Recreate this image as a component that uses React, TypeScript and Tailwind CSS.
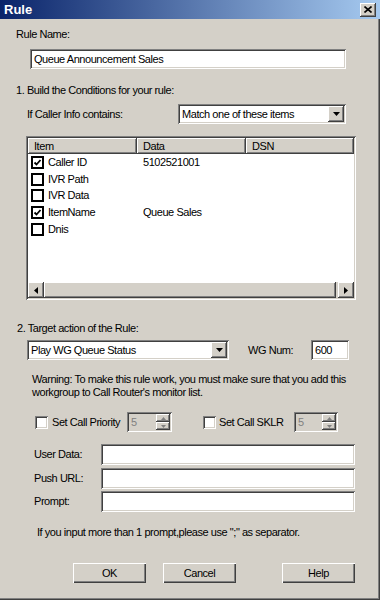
const sunken = 'shadow-[inset_1px_1px_0_#808080,inset_-1px_-1px_0_#ffffff,inset_2px_2px_0_#404040,inset_-2px_-2px_0_#d4d0c8]'
const raised = 'shadow-[inset_-1px_-1px_0_#404040,inset_1px_1px_0_#ffffff,inset_-2px_-2px_0_#808080,inset_2px_2px_0_#d4d0c8]'

function DownArrow() {
  return (
    <svg width="7" height="4" viewBox="0 0 7 4">
      <path d="M0 0h7L3.5 4z" fill="#000" />
    </svg>
  )
}

function Combo({ value, className }: { value: string; className: string }) {
  return (
    <div className={`flex items-center bg-white p-[2px] ${sunken} ${className}`}>
      <span className="flex-1 truncate pl-[2px]">{value}</span>
      <span className={`flex h-full w-[16px] items-center justify-center bg-[#d4d0c8] ${raised}`}>
        <DownArrow />
      </span>
    </div>
  )
}

function Field({ value, className }: { value?: string; className: string }) {
  return (
    <div className={`flex items-center bg-white pl-[4px] ${sunken} ${className}`}>
      {value}
    </div>
  )
}

function ListCheck({ checked }: { checked: boolean }) {
  return (
    <span className="flex h-[13px] w-[13px] items-center justify-center border-2 border-black bg-white">
      {checked ? (
        <svg width="9" height="9" viewBox="0 0 9 9">
          <path d="M1.5 4.5l2 2 4-4.5" fill="none" stroke="#000" strokeWidth="1.8" />
        </svg>
      ) : null}
    </span>
  )
}

function DialogCheck() {
  return <span className={`block h-[13px] w-[13px] bg-white ${sunken}`} />
}

function Spin({ className }: { className: string }) {
  return (
    <div className={`flex items-center bg-[#d4d0c8] p-[2px] ${sunken} ${className}`}>
      <span className="flex-1 pl-[2px] text-[#808080]">5</span>
      <span className="flex h-full w-[14px] flex-col">
        <span className={`flex flex-1 items-center justify-center ${raised}`}>
          <svg width="5" height="3" viewBox="0 0 5 3"><path d="M2.5 0L5 3H0z" fill="#808080" /></svg>
        </span>
        <span className={`flex flex-1 items-center justify-center ${raised}`}>
          <svg width="5" height="3" viewBox="0 0 5 3"><path d="M0 0h5L2.5 3z" fill="#808080" /></svg>
        </span>
      </span>
    </div>
  )
}

function Button({ label, className }: { label: string; className: string }) {
  return (
    <div className={`flex h-[20px] w-[73px] items-center justify-center bg-[#d4d0c8] shadow-[inset_1px_1px_0_#ffffff,inset_-1px_-1px_0_#404040,inset_-2px_-2px_0_#808080] ${className}`}>
      {label}
    </div>
  )
}

const rows = [
  { item: 'Caller ID', data: '5102521001', checked: true },
  { item: 'IVR Path', data: '', checked: false },
  { item: 'IVR Data', data: '', checked: false },
  { item: 'ItemName', data: 'Queue Sales', checked: true },
  { item: 'Dnis', data: '', checked: false },
]

export default function App() {
  return (
    <div className="relative h-[600px] w-[380px] overflow-hidden whitespace-nowrap bg-[#d4d0c8] font-['Liberation_Sans',Arial,sans-serif] text-[11px] leading-[13px] tracking-[-0.45px] text-black shadow-[inset_-1px_-1px_0_#404040,inset_-2px_-2px_0_#808080]">
      <div className="flex h-[19px] items-center justify-between bg-[linear-gradient(90deg,#0a246a,#a6caf0)] pl-[4px] pr-[4px]">
        <span className="text-[13px] font-bold tracking-normal text-white">Rule</span>
        <span className={`flex h-[14px] w-[16px] items-center justify-center bg-[#d4d0c8] ${raised}`}>
          <svg width="8" height="7" viewBox="0 0 8 7">
            <path d="M0.5 0.5l7 6M7.5 0.5l-7 6" stroke="#000" strokeWidth="1.6" />
          </svg>
        </span>
      </div>

      <div className="mt-[9px] pl-[16px]">Rule Name:</div>
      <Field value="Queue Announcement Sales" className="ml-[30px] mt-[8px] h-[20px] w-[316px]" />

      <div className="mt-[15px] pl-[16px]">1. Build the Conditions for your rule:</div>
      <div className="mt-[7px] flex h-[20px] items-center">
        <span className="ml-[27px] w-[151px]">If Caller Info contains:</span>
        <Combo value="Match one of these items" className="h-[20px] w-[168px]" />
      </div>

      <div className={`ml-[26px] mt-[12px] flex h-[164px] w-[330px] flex-col bg-white p-[2px] ${sunken}`}>
        <div className="flex h-[16px]">
          <span className={`w-[109px] bg-[#d4d0c8] pl-[6px] leading-[16px] ${raised}`}>Item</span>
          <span className={`w-[109px] bg-[#d4d0c8] pl-[6px] leading-[16px] ${raised}`}>Data</span>
          <span className={`flex-1 bg-[#d4d0c8] pl-[6px] leading-[16px] ${raised}`}>DSN</span>
        </div>
        <div className="flex-1">
          {rows.map((row) => (
            <div key={row.item} className="flex h-[16.75px] items-center">
              <span className="ml-[3px]">
                <ListCheck checked={row.checked} />
              </span>
              <span className="ml-[4px] w-[95px]">{row.item}</span>
              <span>{row.data}</span>
            </div>
          ))}
        </div>
        <div className="flex h-[16px] bg-[#d4d0c8]">
          <span className={`flex w-[16px] items-center justify-center ${raised}`}>
            <svg width="4" height="7" viewBox="0 0 4 7"><path d="M4 0v7L0 3.5z" fill="#000" /></svg>
          </span>
          <span className={`mr-[2px] flex-1 ${raised}`} />
          <span className={`flex w-[16px] items-center justify-center ${raised}`}>
            <svg width="4" height="7" viewBox="0 0 4 7"><path d="M0 0v7l4-3.5z" fill="#000" /></svg>
          </span>
        </div>
      </div>

      <div className="mt-[22px] pl-[17px]">2. Target action of the Rule:</div>
      <div className="mt-[5px] flex h-[20px] items-center">
        <Combo value="Play WG Queue Status" className="ml-[27px] h-[20px] w-[202px]" />
        <span className="ml-[19px] w-[63px]">WG Num:</span>
        <Field value="600" className="h-[20px] w-[38px]" />
      </div>

      <div className="mt-[13px] pl-[32px]">
        Warning: To make this rule work, you must make sure that you add this
        <br />
        workgroup to Call Router's monitor list.
      </div>

      <div className="mt-[13px] flex h-[20px] items-center">
        <span className="ml-[35px]"><DialogCheck /></span>
        <span className="ml-[4px] w-[75px]">Set Call Priority</span>
        <Spin className="h-[20px] w-[45px]" />
        <span className="ml-[31px]"><DialogCheck /></span>
        <span className="ml-[3px] w-[75px]">Set Call SKLR</span>
        <Spin className="h-[20px] w-[44px]" />
      </div>

      <div className="mt-[12px] flex flex-col gap-[2.5px]">
        {['User Data:', 'Push URL:', 'Prompt:'].map((label) => (
          <div key={label} className="flex h-[21px] items-center">
            <span className="ml-[34px] w-[67px]">{label}</span>
            <Field className="h-[21px] w-[254px]" />
          </div>
        ))}
      </div>

      <div className="mt-[14px] pl-[37px]">If you input more than 1 prompt,please use ";" as separator.</div>

      <div className="mt-[24px] flex">
        <Button label="OK" className="ml-[73px]" />
        <Button label="Cancel" className="ml-[17px]" />
        <Button label="Help" className="ml-[46px]" />
      </div>
    </div>
  )
}
